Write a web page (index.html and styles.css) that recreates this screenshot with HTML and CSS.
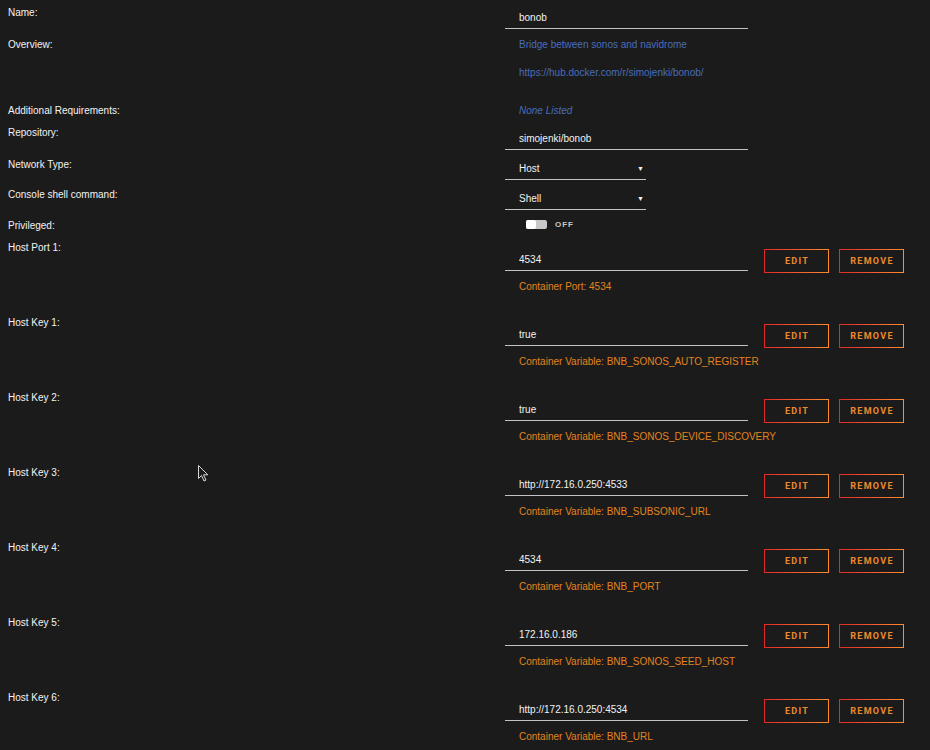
FILE: index.html
```
<!DOCTYPE html>
<html lang="en">
<head>
    <meta charset="UTF-8">
    <title>Update Container</title>
    <link rel="stylesheet" href="styles.css">
</head>
<body>

<!-- Container settings form -->
<div class="form">

    <div class="row row-name">
        <div class="label">Name:</div>
        <div class="value"><input class="field" type="text" value="bonob"></div>
    </div>

    <div class="row row-overview">
        <div class="label">Overview:</div>
        <div class="value">
            <p class="blue">Bridge between sonos and navidrome</p>
            <p class="blue link">https://hub.docker.com/r/simojenki/bonob/</p>
        </div>
    </div>

    <div class="row row-req">
        <div class="label">Additional Requirements:</div>
        <div class="value"><p class="blue italic">None Listed</p></div>
    </div>

    <div class="row row-repo">
        <div class="label">Repository:</div>
        <div class="value"><input class="field" type="text" value="simojenki/bonob"></div>
    </div>

    <div class="row row-select">
        <div class="label">Network Type:</div>
        <div class="value">
            <div class="select">Host<span class="arrow">&#9660;</span></div>
        </div>
    </div>

    <div class="row row-select">
        <div class="label">Console shell command:</div>
        <div class="value">
            <div class="select">Shell<span class="arrow">&#9660;</span></div>
        </div>
    </div>

    <div class="row row-priv">
        <div class="label">Privileged:</div>
        <div class="value toggle-wrap">
            <span class="toggle"><span class="knob"></span></span>
            <span class="toggle-text">OFF</span>
        </div>
    </div>

    <!-- Port / variable entries -->
    <div class="row row-host first">
        <div class="label">Host Port 1:</div>
        <div class="value">
            <div class="entry">
                <input class="field" type="text" value="4534">
                <button class="btn">Edit</button>
                <button class="btn">Remove</button>
            </div>
            <p class="orange">Container Port: 4534</p>
        </div>
    </div>

    <div class="row row-host">
        <div class="label">Host Key 1:</div>
        <div class="value">
            <div class="entry">
                <input class="field" type="text" value="true">
                <button class="btn">Edit</button>
                <button class="btn">Remove</button>
            </div>
            <p class="orange">Container Variable: BNB_SONOS_AUTO_REGISTER</p>
        </div>
    </div>

    <div class="row row-host">
        <div class="label">Host Key 2:</div>
        <div class="value">
            <div class="entry">
                <input class="field" type="text" value="true">
                <button class="btn">Edit</button>
                <button class="btn">Remove</button>
            </div>
            <p class="orange">Container Variable: BNB_SONOS_DEVICE_DISCOVERY</p>
        </div>
    </div>

    <div class="row row-host">
        <div class="label">Host Key 3:</div>
        <div class="value">
            <div class="entry">
                <input class="field" type="text" value="http://172.16.0.250:4533">
                <button class="btn">Edit</button>
                <button class="btn">Remove</button>
            </div>
            <p class="orange">Container Variable: BNB_SUBSONIC_URL</p>
        </div>
    </div>

    <div class="row row-host">
        <div class="label">Host Key 4:</div>
        <div class="value">
            <div class="entry">
                <input class="field" type="text" value="4534">
                <button class="btn">Edit</button>
                <button class="btn">Remove</button>
            </div>
            <p class="orange">Container Variable: BNB_PORT</p>
        </div>
    </div>

    <div class="row row-host">
        <div class="label">Host Key 5:</div>
        <div class="value">
            <div class="entry">
                <input class="field" type="text" value="172.16.0.186">
                <button class="btn">Edit</button>
                <button class="btn">Remove</button>
            </div>
            <p class="orange">Container Variable: BNB_SONOS_SEED_HOST</p>
        </div>
    </div>

    <div class="row row-host">
        <div class="label">Host Key 6:</div>
        <div class="value">
            <div class="entry">
                <input class="field" type="text" value="http://172.16.0.250:4534">
                <button class="btn">Edit</button>
                <button class="btn">Remove</button>
            </div>
            <p class="orange">Container Variable: BNB_URL</p>
        </div>
    </div>

</div>

<!-- Mouse pointer captured in the screenshot -->
<svg class="cursor" width="11" height="17" viewBox="0 0 11 17">
    <path d="M0.5 0.5 L0.5 13.5 L3.5 10.5 L6 16 L8 15 L5.5 9.8 L9.8 9.8 Z" fill="#1c1b1b" stroke="#d8d8d8" stroke-width="1"/>
</svg>

</body>
</html>
```

FILE: styles.css
```
body {
    margin: 0;
    background-color: #1c1b1b;
    color: #f2f2f2;
    font-family: 'Liberation Sans', Arial, sans-serif;
    font-size: 10px;
    overflow: hidden;
}

p {
    margin: 0;
    line-height: 16px;
}

/* Form layout */
.form {
    padding-top: 5px;
}

.row {
    display: flex;
}

.label {
    width: 497px;
    padding-left: 8px;
    line-height: 16px;
    flex-shrink: 0;
}

.value {
    flex: 1;
}

/* Text fields */
.field {
    display: block;
    width: 243px;
    height: 20px;
    box-sizing: border-box;
    margin: 0;
    padding: 0 0 2px 14px;
    border: none;
    border-bottom: 1px solid #c2c2c2;
    background: transparent;
    color: #f2f2f2;
    font-family: 'Liberation Sans', Arial, sans-serif;
    font-size: 10px;
    outline: none;
}

.select {
    position: relative;
    width: 141px;
    height: 20px;
    box-sizing: border-box;
    padding-left: 14px;
    line-height: 18px;
    border-bottom: 1px solid #c2c2c2;
}

.select .arrow {
    position: absolute;
    right: 2px;
    top: 0;
    font-size: 7px;
    color: #f2f2f2;
}

/* Text colours */
.blue {
    color: #486dba;
    padding-left: 14px;
}

.italic {
    font-style: italic;
}

.link {
    margin-top: 12px;
}

.orange {
    color: #e2841f;
    padding-left: 14px;
    margin-top: 6px;
}

/* Row spacing */
.row-name .value {
    margin-top: 4px;
}

.row-overview {
    margin-top: 8px;
}

.row-req {
    margin-top: 22px;
}

.row-repo {
    margin-top: 6px;
}

.row-repo .value {
    margin-top: 5px;
}

.row-select {
    margin-top: 7px;
}

.row-select .value {
    margin-top: 3px;
}

.row-priv {
    margin-top: 8px;
}

.row-host {
    margin-top: 20px;
}

.row-host.first {
    margin-top: 6px;
}

.row-host .value {
    margin-top: 9px;
}

/* Privileged switch */
.toggle-wrap {
    display: flex;
    align-items: center;
    height: 16px;
    margin-top: -2px;
    padding-left: 21px;
}

.toggle {
    display: inline-block;
    width: 21px;
    height: 9px;
    border-radius: 2px;
    background-color: #c8c8c8;
    position: relative;
}

.knob {
    position: absolute;
    left: 0;
    top: 0;
    width: 10px;
    height: 9px;
    border-radius: 2px;
    background-color: #ffffff;
}

.toggle-text {
    margin-left: 8px;
    font-size: 8px;
    font-weight: bold;
    letter-spacing: 1px;
    color: #c8c8c8;
}

/* Entry line with buttons */
.entry {
    display: flex;
    align-items: center;
}

.btn {
    width: 65px;
    height: 24px;
    margin-left: 10px;
    padding: 0 0 0 1px;
    border: 1px solid #e22828;
    border-image: linear-gradient(90deg, #e22828, #ff8c2f) 1;
    background-color: #1c1b1b;
    color: #ec8a2c;
    font-family: Roboto, 'Liberation Sans', sans-serif;
    font-size: 9px;
    font-weight: bold;
    letter-spacing: 1.3px;
    text-transform: uppercase;
}

.entry .field + .btn {
    margin-left: 16px;
}

.cursor {
    position: absolute;
    left: 198px;
    top: 465px;
}
```
